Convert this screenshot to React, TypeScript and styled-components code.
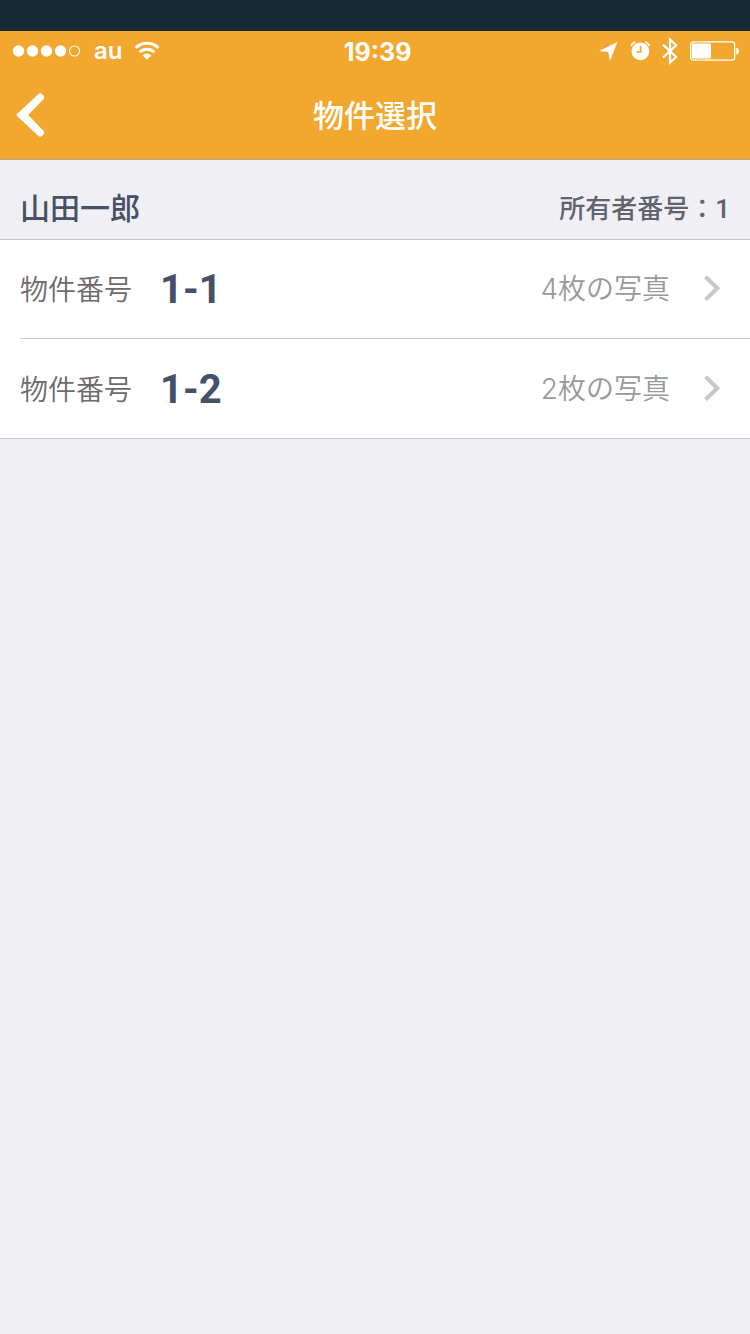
import React from "react";
import styled, { createGlobalStyle } from "styled-components";

const GlobalStyle = createGlobalStyle`
  *, *::before, *::after { box-sizing: border-box; }
  body {
    margin: 0;
    background: #efeff4;
    font-family: Inter, "Noto Sans CJK JP", sans-serif;
  }
`;

const Backdrop = styled.div`
  height: 31px;
  background: #152a35;
`;

const TopBar = styled.header`
  background: #f2a72e;
  color: #fff;
  border-bottom: 1px solid #b8a890;
`;

const StatusBar = styled.div`
  display: grid;
  grid-template-columns: 1fr auto 1fr;
  align-items: center;
  height: 40px;
  padding: 0 11px 0 12px;
  font-size: 24px;
  line-height: 38px;
`;

const StatusGroup = styled.div<{ $end?: boolean }>`
  display: flex;
  align-items: center;
  justify-content: ${(p) => (p.$end ? "flex-end" : "flex-start")};
  gap: 12px;
`;

const Carrier = styled.span`
  font-weight: 600;
`;

const Clock = styled.time`
  padding-top: 2px;
  padding-left: 4px;
  font-size: 25px;
  font-weight: 700;
`;

const NavBar = styled.nav`
  display: grid;
  grid-template-columns: 60px 1fr 60px;
  align-items: center;
  height: 88px;
`;

const BackButton = styled.button`
  display: flex;
  align-items: center;
  height: 88px;
  padding: 0 0 0 16px;
  border: 0;
  background: none;
  color: inherit;
  cursor: pointer;
`;

const Title = styled.h1`
  margin: 0;
  padding-bottom: 2px;
  font-family: "Noto Sans CJK JP", sans-serif;
  font-size: 31px;
  font-weight: 500;
  line-height: 48px;
  text-align: center;
`;

const SectionHeader = styled.div`
  display: flex;
  align-items: flex-end;
  justify-content: space-between;
  height: 80px;
  padding: 0 20px 8px;
  border-bottom: 1px solid #c8c7cc;
  font-family: Roboto, "Noto Sans CJK JP", sans-serif;
  line-height: 44px;
`;

const OwnerName = styled.h2`
  margin: 0;
  color: #465067;
  font-size: 30px;
  font-weight: 500;
`;

const OwnerNumber = styled.span`
  color: #5f646d;
  font-size: 26px;
  font-weight: 500;
`;

const List = styled.ul`
  margin: 0;
  padding: 0;
  list-style: none;
  background: #fff;
  border-bottom: 1px solid #c8c7cc;
`;

const Item = styled.li`
  padding-left: 20px;
`;

const Row = styled.a`
  display: flex;
  align-items: center;
  height: 99px;
  padding-right: 29px;
  color: inherit;
  text-decoration: none;

  ${Item}:not(:last-child) > & {
    border-bottom: 1px solid #c8c7cc;
  }
`;

const Label = styled.span`
  padding-bottom: 2px;
  font-family: "Noto Sans CJK JP", sans-serif;
  font-size: 28px;
  font-weight: 350;
  line-height: 40px;
  color: #6b6b6b;
`;

const PropertyNumber = styled.strong`
  margin-left: 28px;
  padding-top: 2px;
  font-family: Roboto, "Liberation Sans", sans-serif;
  font-size: 40px;
  line-height: 48px;
  color: #465067;
`;

const PhotoCount = styled.span`
  margin-left: auto;
  margin-right: 33px;
  font-size: 28px;
  font-weight: 350;
  line-height: 40px;
  color: #999;
`;

const SignalIcon = () => (
  <svg width="70" height="14" viewBox="0 0 70 14" role="img" aria-label="電波">
    {[7, 21, 35, 49].map((x) => (
      <circle key={x} cx={x - 0.5} cy="7" r="5.7" fill="#fff" />
    ))}
    <circle cx="62.5" cy="7" r="5" fill="none" stroke="#fff" strokeWidth="1.1" />
  </svg>
);

const WifiIcon = () => (
  <svg width="26" height="20" viewBox="0 0 26 20" role="img" aria-label="Wi-Fi">
    <g fill="none" stroke="#fff" strokeWidth="3">
      <path d="M1.7 6.9A16 16 0 0 1 24.3 6.9" />
      <path d="M5.7 11.3A10.3 10.3 0 0 1 20.3 11.3" />
    </g>
    <path d="M13 18.8 8.6 14.4A6.2 6.2 0 0 1 17.4 14.4Z" fill="#fff" />
  </svg>
);

const LocationIcon = () => (
  <svg width="20" height="20" viewBox="0 0 20 20" role="img" aria-label="位置情報">
    <path d="M19.4 1 12 20 10.2 11 1 10Z" fill="#fff" />
  </svg>
);

const AlarmIcon = () => (
  <svg width="20" height="20" viewBox="0 0 20 20" role="img" aria-label="アラーム">
    <circle cx="10.4" cy="10.3" r="8.9" fill="#fff" />
    <path
      d="M1.2 5A6 6 0 0 1 5.4 1M15.2 1A6 6 0 0 1 19.4 5"
      fill="none"
      stroke="#fff"
      strokeWidth="1.6"
    />
    <path d="M10.6 5V11H6.4" fill="none" stroke="#f2a72e" strokeWidth="1.7" />
  </svg>
);

const BluetoothIcon = () => (
  <svg width="16" height="28" viewBox="0 0 16 28" role="img" aria-label="Bluetooth">
    <path
      d="M1 7.6 14.2 20 8 25.6V2.6L14.2 8.2 1 20.6"
      fill="none"
      stroke="#fff"
      strokeWidth="2.2"
    />
  </svg>
);

const BatteryIcon = () => (
  <svg width="49" height="20" viewBox="0 0 49 20" role="img" aria-label="バッテリー">
    <rect x="0.7" y="0.9" width="44" height="18.2" rx="2.6" fill="none" stroke="#fff" strokeWidth="1.3" />
    <rect x="2" y="2.4" width="19" height="15.2" rx="1" fill="#fff" />
    <path d="M46.2 6.4Q48.9 7 48.9 10T46.2 13.6Z" fill="#fff" />
  </svg>
);

const BackIcon = () => (
  <svg width="30" height="46" viewBox="0 0 30 46" aria-hidden="true">
    <path
      d="M22.2 2.2Q24.4 0.4 26.4 2.4L27 2.9Q29.2 5 27.4 7.2L12.2 23 27.4 38.8Q29.2 41 27 43.1L26.4 43.6Q24.4 45.6 22.2 43.8L1 24Q0.2 23 1 22Z"
      fill="#fff"
    />
  </svg>
);

const Chevron = () => (
  <svg width="18" height="28" viewBox="0 0 18 28" aria-hidden="true">
    <path d="M2.5 1.8 14.3 13.2 2.5 24.6" fill="none" stroke="#c7c7cc" strokeWidth="4" />
  </svg>
);

const properties = [
  { number: "1-1", photos: 4 },
  { number: "1-2", photos: 2 },
];

export default function App() {
  return (
    <>
      <GlobalStyle />
      <Backdrop />
      <TopBar>
        <StatusBar>
          <StatusGroup>
            <SignalIcon />
            <Carrier>au</Carrier>
            <WifiIcon />
          </StatusGroup>
          <Clock>19:39</Clock>
          <StatusGroup $end>
            <LocationIcon />
            <AlarmIcon />
            <BluetoothIcon />
            <BatteryIcon />
          </StatusGroup>
        </StatusBar>
        <NavBar>
          <BackButton type="button" aria-label="戻る">
            <BackIcon />
          </BackButton>
          <Title>物件選択</Title>
        </NavBar>
      </TopBar>
      <main>
        <SectionHeader>
          <OwnerName>山田一郎</OwnerName>
          <OwnerNumber>所有者番号：1</OwnerNumber>
        </SectionHeader>
        <List>
          {properties.map((p) => (
            <Item key={p.number}>
              <Row href={`#${p.number}`}>
                <Label>物件番号</Label>
                <PropertyNumber>{p.number}</PropertyNumber>
                <PhotoCount>{p.photos}枚の写真</PhotoCount>
                <Chevron />
              </Row>
            </Item>
          ))}
        </List>
      </main>
    </>
  );
}
